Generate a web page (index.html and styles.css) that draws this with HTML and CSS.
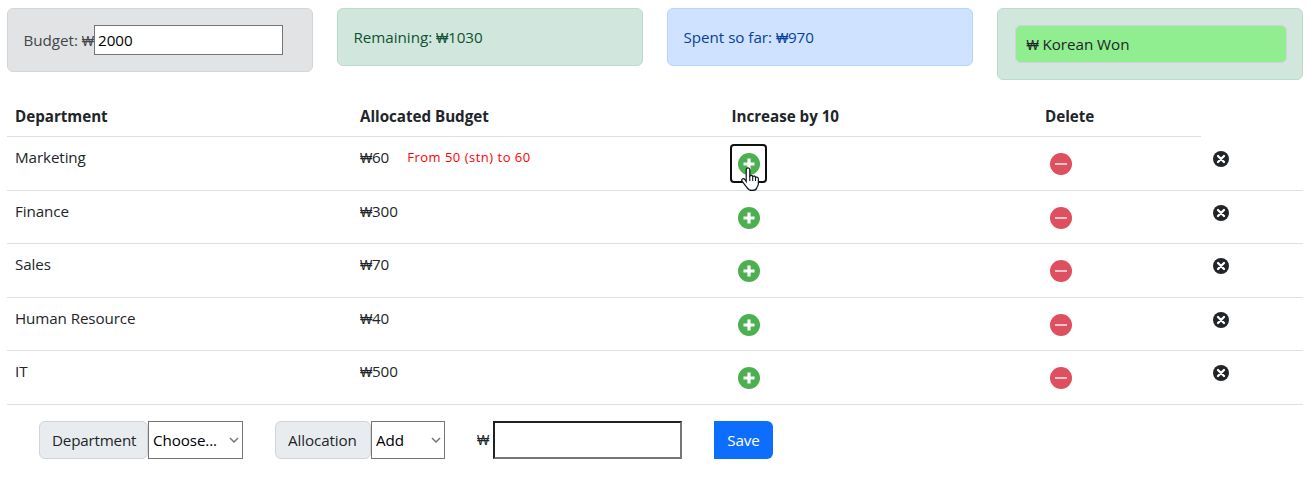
FILE: index.html
```
<!DOCTYPE html>
<html lang="en">
<head>
<meta charset="utf-8">
<title>Budget Allocation</title>
<link rel="stylesheet" href="styles.css">
</head>
<body>
<svg class="defs" width="0" height="0">
  <symbol id="plus" viewBox="0 0 22 22"><circle cx="11" cy="11" r="11" fill="#4caf50"/><path d="M11 5.5v11M5.5 11h11" stroke="#fff" stroke-width="3.2"/></symbol>
  <symbol id="minus" viewBox="0 0 22 22"><circle cx="11" cy="11" r="11" fill="#de4f5f"/><path d="M5 11h12" stroke="#f3c6cb" stroke-width="2"/></symbol>
  <symbol id="close" viewBox="0 0 16 16"><circle cx="8" cy="8" r="8" fill="#212529"/><path d="M5 5l6 6M11 5l-6 6" stroke="#fff" stroke-width="2.3" stroke-linecap="round"/></symbol>
</svg>
<header class="cards">
  <div class="card secondary"><span class="t-budget">Budget: <span class="won">₩</span></span><input class="budget" type="text" value="2000"></div>
  <div class="card success"><span>Remaining: <span class="won">₩</span>1030</span></div>
  <div class="card primary"><span>Spent so far: <span class="won">₩</span>970</span></div>
  <div class="card success"><div class="currency"><span class="won">₩</span> Korean Won</div></div>
</header>
<main class="table">
  <div class="row head"><div>Department</div><div>Allocated Budget</div><div>Increase by 10</div><div>Delete</div></div>
  <div class="row"><div>Marketing</div><div><span class="won">₩</span>60<span class="note">From 50 (stn) to 60</span></div>
    <div><button class="inc focused"><svg><use href="#plus"/></svg><svg class="hand" viewBox="0 0 18 24"><path d="M5.2 14.5V2.8C5.2.2 8.8.2 8.8 2.8V9C9.8 8 11.3 8.3 11.7 9.5C12.8 8.7 14.2 9.1 14.5 10.4C15.8 9.7 17.4 10.4 17.4 12V16.5C17.4 18.4 16.2 19.5 15.6 21.2C15 23 13 23.4 11 23.4C8.5 23.4 7.2 22.6 6 20.6L1 14.2C-.2 12.3 2.4 10.8 3.8 12.5Z" fill="#fff" stroke="#10151f" stroke-width="1.2"/><path d="M8.8 9v5M11.7 9.5V14M14.5 10.4V14" fill="none" stroke="#10151f" stroke-width="1.1"/></svg></button></div>
    <div><button class="dec"><svg><use href="#minus"/></svg></button></div><div><svg class="close"><use href="#close"/></svg></div></div>
  <div class="row"><div>Finance</div><div><span class="won">₩</span>300</div><div><button class="inc"><svg><use href="#plus"/></svg></button></div><div><button class="dec"><svg><use href="#minus"/></svg></button></div><div><svg class="close"><use href="#close"/></svg></div></div>
  <div class="row"><div>Sales</div><div><span class="won">₩</span>70</div><div><button class="inc"><svg><use href="#plus"/></svg></button></div><div><button class="dec"><svg><use href="#minus"/></svg></button></div><div><svg class="close"><use href="#close"/></svg></div></div>
  <div class="row"><div>Human Resource</div><div><span class="won">₩</span>40</div><div><button class="inc"><svg><use href="#plus"/></svg></button></div><div><button class="dec"><svg><use href="#minus"/></svg></button></div><div><svg class="close"><use href="#close"/></svg></div></div>
  <div class="row"><div>IT</div><div><span class="won">₩</span>500</div><div><button class="inc"><svg><use href="#plus"/></svg></button></div><div><button class="dec"><svg><use href="#minus"/></svg></button></div><div><svg class="close"><use href="#close"/></svg></div></div>
</main>
<div class="form">
  <div class="group"><label class="tag dept">Department</label><div class="select choose">Choose...<svg viewBox="0 0 10 6"><path d="M1 1l4 4 4-4"/></svg></div></div>
  <div class="group"><label class="tag alloc">Allocation</label><div class="select add">Add<svg viewBox="0 0 10 6"><path d="M1 1l4 4 4-4"/></svg></div></div>
  <div class="group amount"><span class="won">₩</span><input type="text"></div>
  <button class="save">Save</button>
</div>
</body>
</html>
```
FILE: styles.css
```
* { box-sizing: border-box; }
body { margin: 0; padding: 8px 8px 0 7px; background: #fff; color: #212529; font: 15.2px/24px "Open Sans", sans-serif; letter-spacing: -.1px; }
.defs { position: absolute; }
svg { display: block; }
button { border: 0; background: none; padding: 0; font: inherit; letter-spacing: inherit; }
.won { display: inline-block; width: 12px; font-size: 13px; line-height: 20px; white-space: nowrap; transform: scaleY(1.15); transform-origin: 50% 72%; }

.cards { display: grid; grid-template-columns: repeat(4, 306px); gap: 24px; align-items: start; height: 88px; letter-spacing: -.03px; }
.card { display: flex; align-items: center; padding: 16px 15.5px; border: 1px solid; border-radius: 6px; }
.secondary { height: 64px; background: #e2e3e5; border-color: #d3d6d8; color: #41464b; }
.success { background: #d1e7dd; border-color: #badbcc; color: #0f5132; }
.primary { background: #cfe2ff; border-color: #b6d4fe; color: #084298; }
.t-budget { width: 70.5px; white-space: nowrap; }
.budget { width: 189px; height: 30px; border: 1px solid #767676; padding: 0 3px; font: inherit; color: #000; }
.currency { width: 272px; height: 38px; padding: 6px 11px; border: 1px solid #ced4da; border-radius: 6px; background: #90ee90; color: #212529; margin-left: 1px; }

.row { display: grid; grid-template-columns: 345px 371px 314px 165px 101px; height: 54px; padding-top: 8px; border-bottom: 1px solid #dee2e6; }
.row:nth-child(odd) { height: 53px; }
.row > div { padding-left: 8px; }
.row.head { grid-template-columns: 345px 371.5px 313.5px 164px; width: 1194px; height: 41px; font-weight: 700; letter-spacing: -.03px; }
.note { margin-left: 18px; color: #f00; font-size: 13px; letter-spacing: .5px; position: relative; top: -1px; }
.inc, .dec { display: flex; align-items: center; justify-content: center; height: 37px; }
.inc { position: relative; width: 35px; }
.dec { width: 32px; height: 38px; }
.inc > svg:first-child, .dec > svg { width: 22px; height: 22px; }
.focused { outline: 2px solid #101010; outline-offset: -1px; border-radius: 3px; }
.hand { position: absolute; left: 10px; top: 22px; width: 18px; height: 24px; }
.close { width: 16px; height: 16px; margin: 6px 0 0 3px; }

.form { display: flex; gap: 32px; padding: 16px 0 0 32px; height: 54px; }
.group { display: flex; height: 38px; align-items: center; }
.tag { height: 38px; padding: 6px 0 0 12px; background: #e9ecef; border: 1px solid #ced4da; border-radius: 6px; }
.dept { width: 109px; letter-spacing: -.2px; }
.alloc { width: 96px; }
.select { display: flex; align-items: center; justify-content: space-between; height: 38px; padding: 0 3px 0 4px; border: 1px solid #767676; color: #000; }
.select svg { width: 10px; height: 6px; fill: none; stroke: #767676; stroke-width: 1.5; }
.choose { width: 95px; }
.add { width: 74px; }
.amount input { width: 189px; height: 38px; margin-left: 4px; border: 2px solid; border-color: #212121 #767676 #767676 #212121; padding: 0 4px; font: inherit; }
.save { width: 59px; height: 38px; border-radius: 0 6px 6px 0; background: #0d6efd; color: #fff; }
```
